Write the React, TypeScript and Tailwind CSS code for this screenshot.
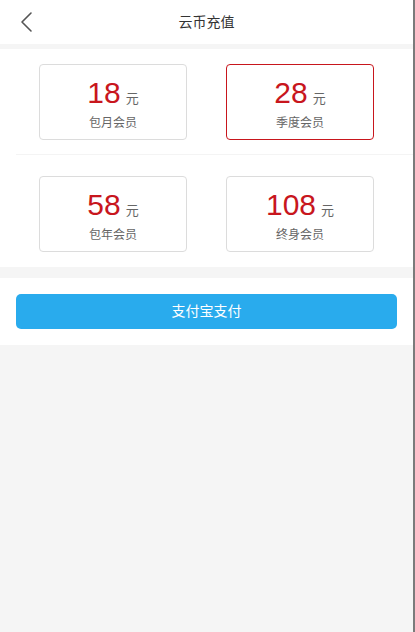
import React from "react";

const plans = [
  [
    { price: "18", name: "包月会员", active: false },
    { price: "28", name: "季度会员", active: true },
  ],
  [
    { price: "58", name: "包年会员", active: false },
    { price: "108", name: "终身会员", active: false },
  ],
];

function PlanCard({ price, name, active }: { price: string; name: string; active: boolean }) {
  return (
    <div
      className={`flex h-[76px] w-[148px] flex-col items-center rounded-[4px] border bg-white pt-[13px] ${
        active ? "border-[#c8161d]" : "border-[#dcdcdc]"
      }`}
    >
      <div className="flex items-baseline gap-[5px]">
        <span className="text-[30px] leading-[30px] text-[#c8161d]">{price}</span>
        <span className="text-[13px] leading-[16px] text-[#666]">元</span>
      </div>
      <div className="mt-[7px] text-[12px] leading-[16px] text-[#666]">{name}</div>
    </div>
  );
}

export default function App() {
  return (
    <div
      className="flex min-h-[632px] w-full"
      style={{ fontFamily: '"Liberation Sans", "Noto Sans CJK SC", sans-serif' }}
    >
      <div className="flex-1 bg-[#f5f5f5]">
        <header className="grid h-[44px] grid-cols-[1fr_auto_1fr] items-center bg-white">
          <button className="ml-[16px] flex h-[24px] w-[20px] items-center justify-center">
            <svg width="14" height="22" viewBox="0 0 14 22" fill="none">
              <path d="M12 2 L3 11 L12 20" stroke="#555" strokeWidth="1.6" strokeLinecap="round" strokeLinejoin="round" />
            </svg>
          </button>
          <h1 className="text-[14px] text-[#333]">云币充值</h1>
          <div />
        </header>

        <section className="mt-[5px] bg-white">
          <div className="flex gap-[39px] pb-[14px] pl-[39px] pt-[15px]">
            {plans[0].map((p) => (
              <PlanCard key={p.price} {...p} />
            ))}
          </div>
          <div className="ml-[16px] h-px bg-[#f4f4f4]" />
          <div className="flex gap-[39px] pb-[15px] pl-[39px] pt-[21px]">
            {plans[1].map((p) => (
              <PlanCard key={p.price} {...p} />
            ))}
          </div>
        </section>

        <section className="mt-[11px] bg-white p-[16px]">
          <button className="flex h-[35px] w-full items-center justify-center rounded-[5px] bg-[#29abed] text-[14px] text-white">
            支付宝支付
          </button>
        </section>
      </div>
      <div className="w-[2px] bg-[#7b7b7b]" />
    </div>
  );
}
